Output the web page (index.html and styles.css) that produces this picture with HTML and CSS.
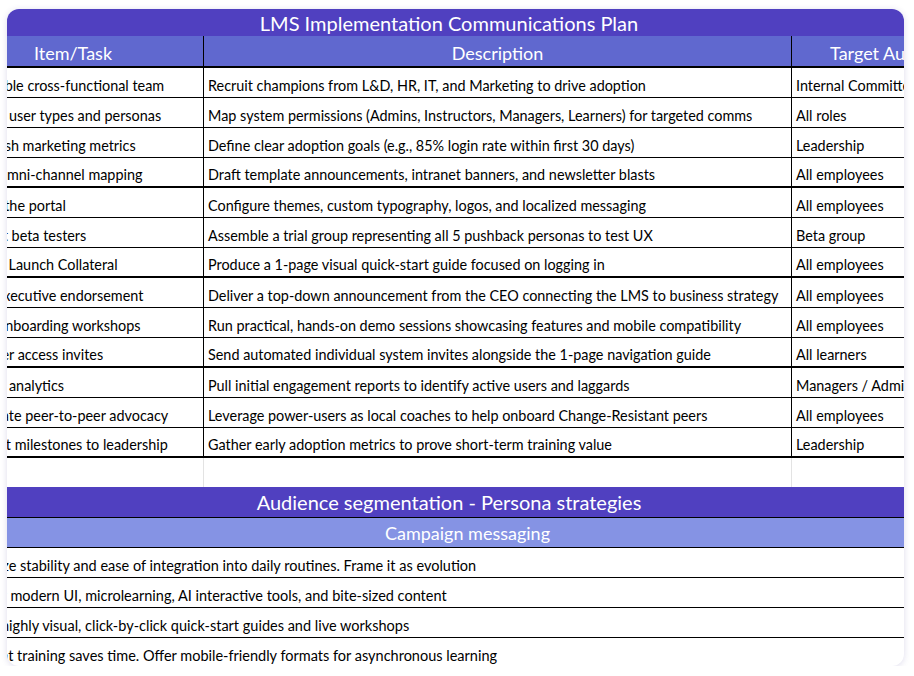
FILE: index.html
```html
<!DOCTYPE html>
<html>
<head>
  <link rel="stylesheet" href="styles.css">
</head>
<body>
  <div class="card">
    <div class="band band-title first">LMS Implementation Communications Plan</div>

    <div class="plan">
      <div class="th">Item/Task</div>
      <div class="th">Description</div>
      <div class="th">Target Audience</div>

      <div class="td task">Assemble cross-functional team</div>
      <div class="td">Recruit champions from L&amp;D, HR, IT, and Marketing to drive adoption</div>
      <div class="td">Internal Committee</div>

      <div class="td task">Define user types and personas</div>
      <div class="td">Map system permissions (Admins, Instructors, Managers, Learners) for targeted comms</div>
      <div class="td">All roles</div>

      <div class="td task">Establish marketing metrics</div>
      <div class="td">Define clear adoption goals (e.g., 85% login rate within first 30 days)</div>
      <div class="td">Leadership</div>

      <div class="td task end">Build omni-channel mapping</div>
      <div class="td end">Draft template announcements, intranet banners, and newsletter blasts</div>
      <div class="td end">All employees</div>

      <div class="td task">Brand the portal</div>
      <div class="td">Configure themes, custom typography, logos, and localized messaging</div>
      <div class="td">All employees</div>

      <div class="td task">Recruit beta testers</div>
      <div class="td">Assemble a trial group representing all 5 pushback personas to test UX</div>
      <div class="td">Beta group</div>

      <div class="td task end">Create Launch Collateral</div>
      <div class="td end">Produce a 1-page visual quick-start guide focused on logging in</div>
      <div class="td end">All employees</div>

      <div class="td task">Gain executive endorsement</div>
      <div class="td">Deliver a top-down announcement from the CEO connecting the LMS to business strategy</div>
      <div class="td">All employees</div>

      <div class="td task">Host onboarding workshops</div>
      <div class="td">Run practical, hands-on demo sessions showcasing features and mobile compatibility</div>
      <div class="td">All employees</div>

      <div class="td task end">Set user access invites</div>
      <div class="td end">Send automated individual system invites alongside the 1-page navigation guide</div>
      <div class="td end">All learners</div>

      <div class="td task">Assess analytics</div>
      <div class="td">Pull initial engagement reports to identify active users and laggards</div>
      <div class="td">Managers / Admins</div>

      <div class="td task">Generate peer-to-peer advocacy</div>
      <div class="td">Leverage power-users as local coaches to help onboard Change-Resistant peers</div>
      <div class="td">All employees</div>

      <div class="td task end">Present milestones to leadership</div>
      <div class="td end">Gather early adoption metrics to prove short-term training value</div>
      <div class="td end">Leadership</div>

      <div class="blank"></div>
      <div class="blank"></div>
      <div class="blank"></div>
    </div>

    <div class="band band-title second">Audience segmentation - Persona strategies</div>
    <div class="band band-sub">Campaign messaging</div>

    <div class="messages">
      <div class="msg">Emphasize stability and ease of integration into daily routines. Frame it as evolution</div>
      <div class="msg">Highlight modern UI, microlearning, AI interactive tools, and bite-sized content</div>
      <div class="msg">Provide highly visual, click-by-click quick-start guides and live workshops</div>
      <div class="msg">Show that training saves time. Offer mobile-friendly formats for asynchronous learning</div>
    </div>
  </div>
</body>
</html>
```

FILE: styles.css
```css
:root {
  --purple: #5040c0;
  --purple-mid: #6068cf;
  --purple-light: #8593e4;
  --line: #000000;
  --grid: #e3e3e3;
}

body {
  margin: 0;
  padding: 9px 0 0 7px;
  font-family: Lato, "DejaVu Sans", sans-serif;
  background: #ffffff;
  color: #000000;
}

.card {
  width: 897px;
  height: 657px;
  border-radius: 12px;
  overflow: hidden;
  background: #ffffff;
  box-shadow: 0 1px 6px rgba(70, 60, 150, 0.18);
}

.band {
  display: flex;
  align-items: center;
  justify-content: center;
  color: #ffffff;
  white-space: nowrap;
  box-sizing: border-box;
}

.band-title {
  background: var(--purple);
  font-size: 20px;
  padding-right: 13px;
}

.band-title.first {
  height: 27px;
}

.band-title.second {
  height: 31px;
  border-bottom: 1px solid var(--line);
}

.band-sub {
  height: 30px;
  background: var(--purple-light);
  font-size: 18px;
  padding-left: 24px;
  border-bottom: 1px solid var(--line);
}

/* communications plan grid, scrolled to the left like the sheet */
.plan {
  display: grid;
  grid-template-columns: 261px 588px 204px;
  margin-left: -64px;
  width: max-content;
}

.th {
  height: 32px;
  box-sizing: border-box;
  background: var(--purple-mid);
  color: #ffffff;
  font-size: 18px;
  display: flex;
  align-items: flex-end;
  justify-content: center;
  padding-bottom: 2px;
  border-bottom: 2px solid var(--line);
  border-right: 1px solid var(--line);
  white-space: nowrap;
}

.td {
  height: 30px;
  box-sizing: border-box;
  display: flex;
  align-items: flex-end;
  padding: 0 4px 3px;
  font-size: 14.4px;
  white-space: nowrap;
  overflow: hidden;
  border-bottom: 1px solid var(--line);
  border-right: 1px solid var(--line);
}

.td.task {
  padding-left: 20px;
}

.td.end {
  border-bottom-width: 2px;
}

.blank {
  height: 29px;
  box-sizing: border-box;
  border-right: 1px solid var(--grid);
}

.messages {
  margin-left: -62px;
}

.msg {
  height: 30px;
  box-sizing: border-box;
  display: flex;
  align-items: flex-end;
  padding: 0 0 3px 4px;
  font-size: 14.5px;
  white-space: nowrap;
  border-bottom: 1px solid var(--line);
}
```
